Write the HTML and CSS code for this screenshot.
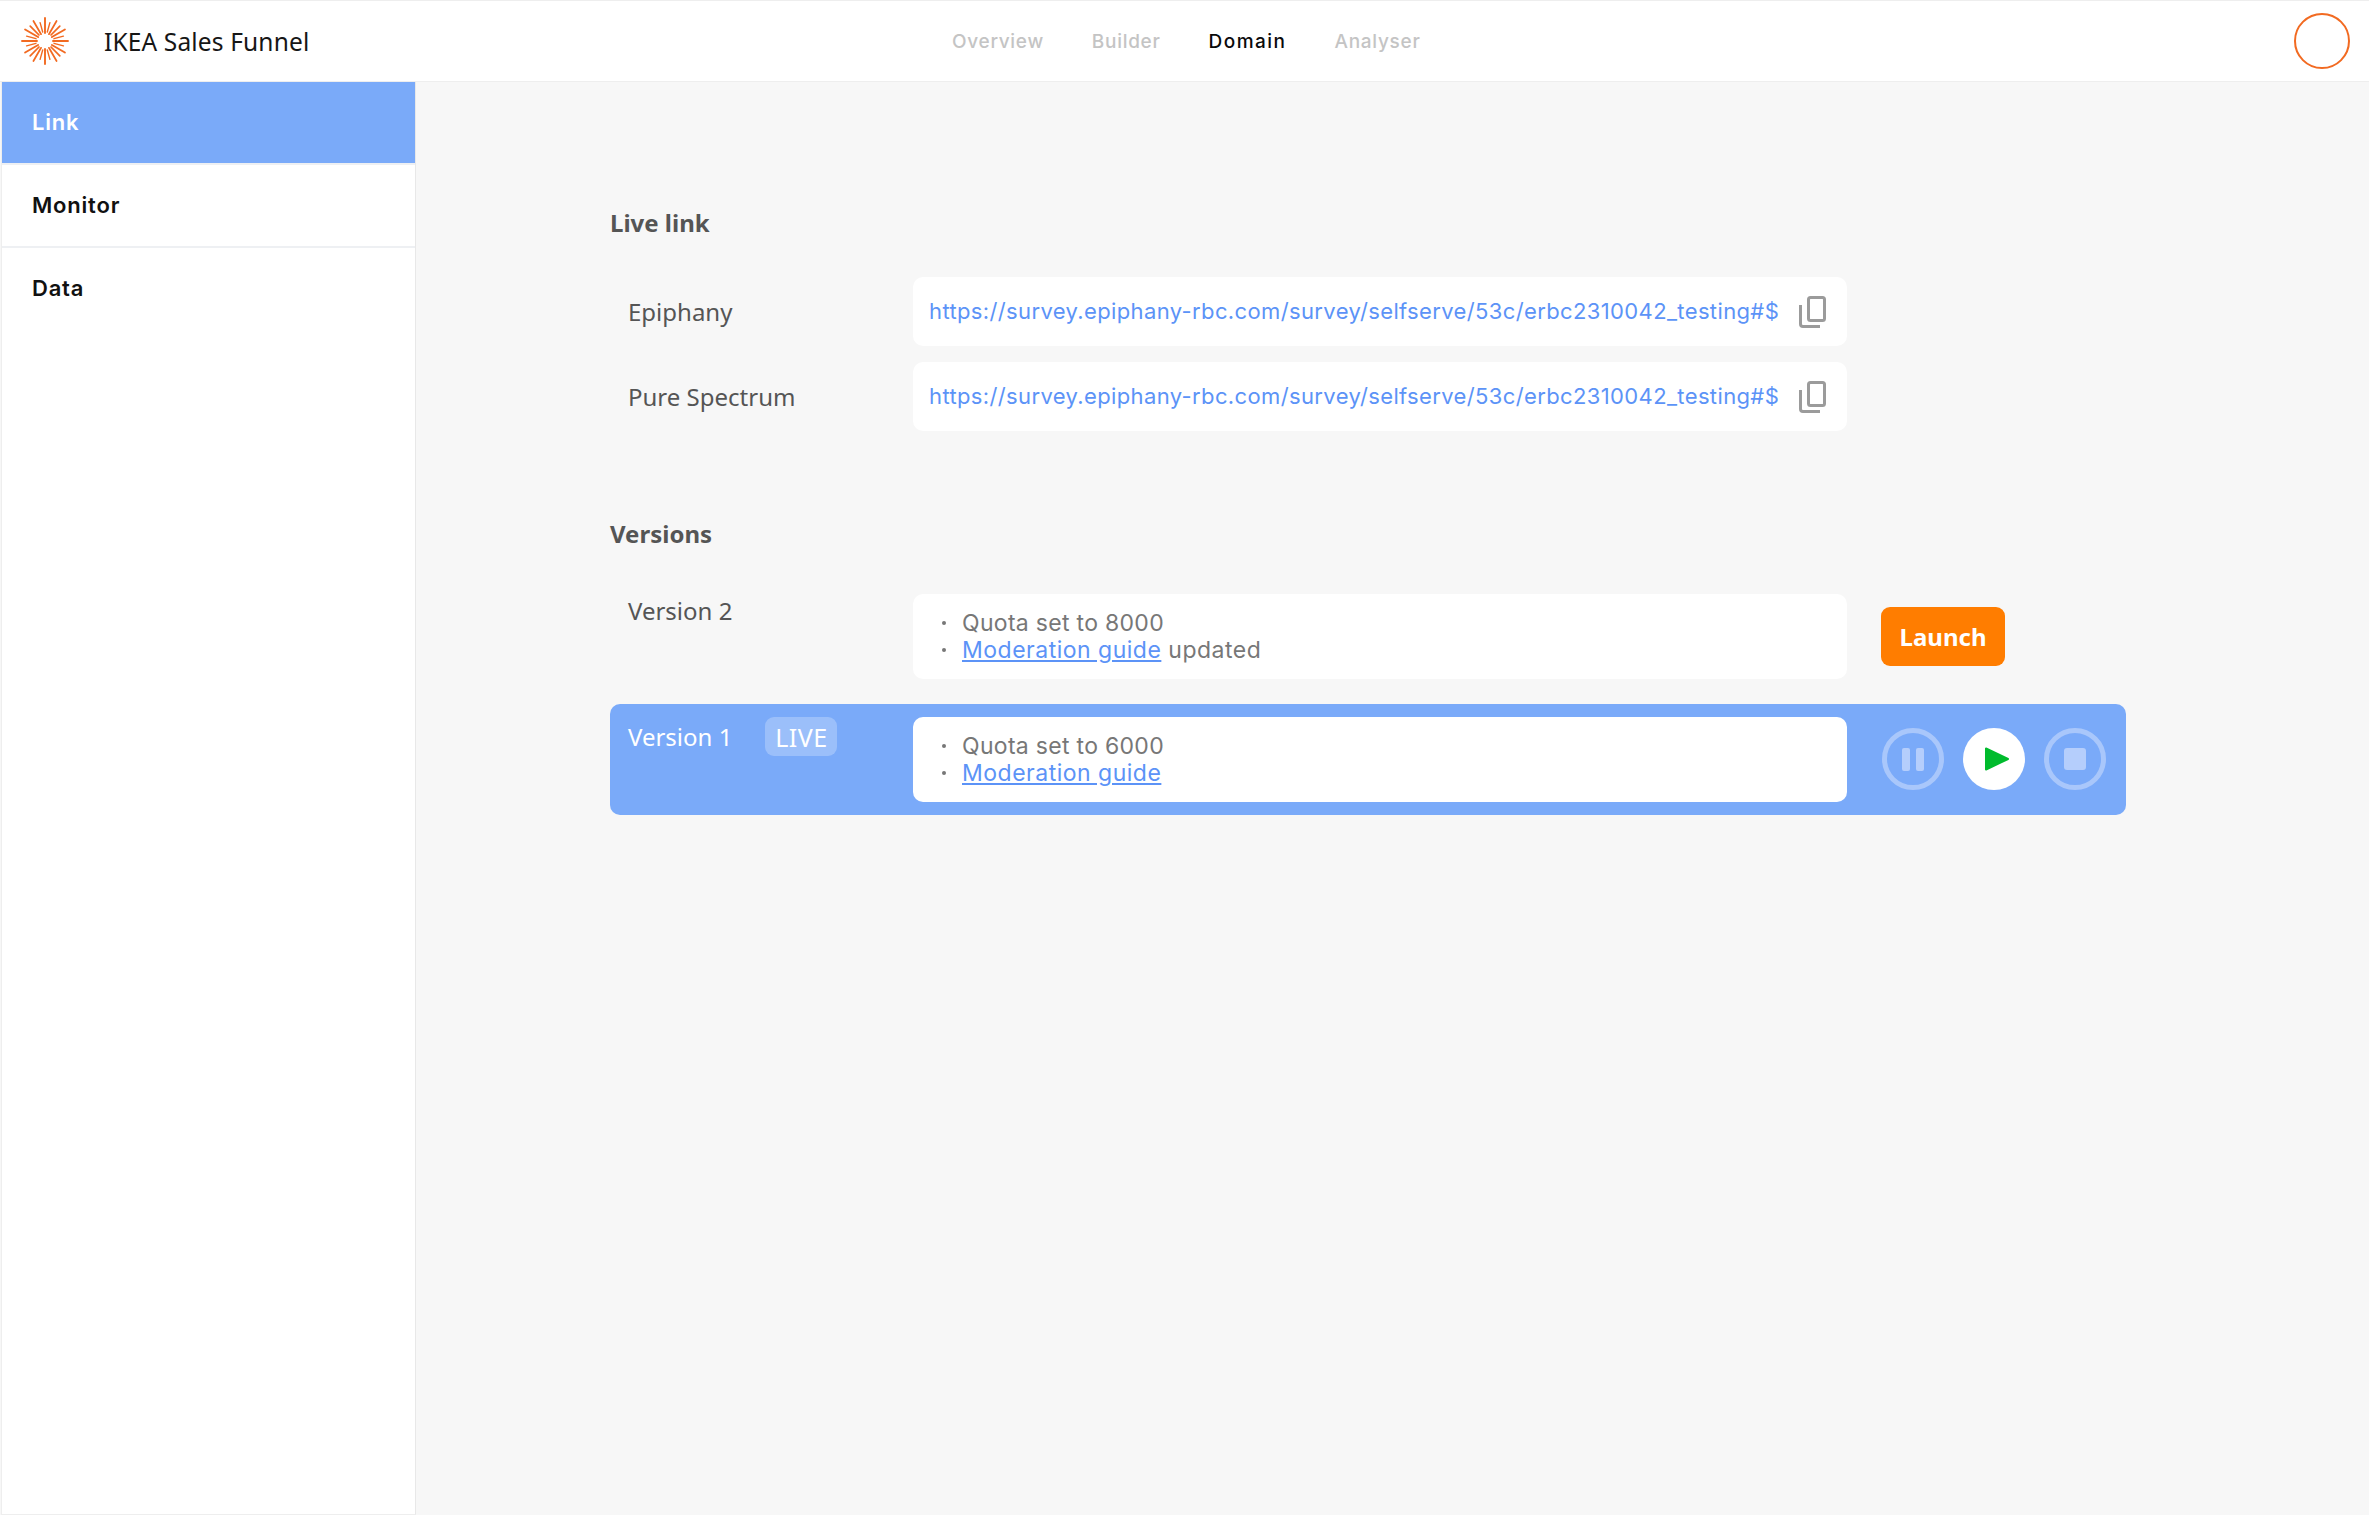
FILE: index.html
```html
<!DOCTYPE html>
<html lang="en">
<head>
<meta charset="utf-8">
<title>IKEA Sales Funnel</title>
<link rel="stylesheet" href="styles.css">
</head>
<body>
<header class="topbar">
  <div class="brand">
    <svg class="logo" viewBox="-24 -24 48 48" width="48" height="48">
      <g id="q">
        <path class="ray-long" d="M0-23V-8M11.5-19.9 4-6.9M19.9-11.5 6.9-4" />
        <path class="ray-mid" d="M14.8-14.8 6-6" />
        <path class="ray-short" d="M4.9-18.4 2.3-9M18.4-4.9 9-2.3" />
      </g>
      <use href="#q" transform="rotate(90)"/>
      <use href="#q" transform="rotate(180)"/>
      <use href="#q" transform="rotate(270)"/>
    </svg>
    <span class="brand-name">IKEA Sales Funnel</span>
  </div>
  <nav class="tabs">
    <a class="tab">Overview</a>
    <a class="tab">Builder</a>
    <a class="tab tab-active">Domain</a>
    <a class="tab">Analyser</a>
  </nav>
  <div class="avatar"></div>
</header>
<div class="shell">
  <aside class="sidebar">
    <a class="side-item side-active">Link</a>
    <a class="side-item">Monitor</a>
    <a class="side-item side-last">Data</a>
  </aside>
  <main class="content">
    <h2 class="heading">Live link</h2>
    <div class="links">
      <div class="row">
        <span class="label">Epiphany</span>
        <div class="card url-card">
          <a class="url">https://survey.epiphany-rbc.com/survey/selfserve/53c/erbc2310042_testing#$</a>
          <svg class="copy" viewBox="0 0 27 32" width="27" height="32"><rect x="9.5" y="1.5" width="16" height="23" rx="2"/><path d="M1.5 9v19a2.5 2.5 0 0 0 2.5 2.5h17"/></svg>
        </div>
      </div>
      <div class="row">
        <span class="label">Pure Spectrum</span>
        <div class="card url-card">
          <a class="url">https://survey.epiphany-rbc.com/survey/selfserve/53c/erbc2310042_testing#$</a>
          <svg class="copy" viewBox="0 0 27 32" width="27" height="32"><rect x="9.5" y="1.5" width="16" height="23" rx="2"/><path d="M1.5 9v19a2.5 2.5 0 0 0 2.5 2.5h17"/></svg>
        </div>
      </div>
    </div>
    <h2 class="heading heading-versions">Versions</h2>
    <div class="row version">
      <span class="label version-label">Version 2</span>
      <div class="card notes">
        <ul class="note-list">
          <li>Quota set to 8000</li>
          <li><span class="guide-line"><a class="guide">Moderation guide</a> updated</span></li>
        </ul>
      </div>
      <button class="launch">Launch</button>
    </div>
    <div class="row version version-live">
      <div class="live-head">
        <span class="label version-label">Version 1</span>
        <span class="badge">LIVE</span>
      </div>
      <div class="card notes">
        <ul class="note-list">
          <li>Quota set to 6000</li>
          <li><span class="guide-line"><a class="guide">Moderation guide</a></span></li>
        </ul>
      </div>
      <div class="controls">
        <svg class="ctl" viewBox="0 0 62 62" width="62" height="62"><circle class="ring" cx="31" cy="31" r="28.5"/><rect class="ghost" x="20" y="20" width="8" height="23" rx="2"/><rect class="ghost" x="34" y="20" width="8" height="23" rx="2"/></svg>
        <svg class="ctl" viewBox="0 0 62 62" width="62" height="62"><circle class="disc" cx="31" cy="31" r="31"/><path class="play" d="M23 20.5v21l22-10.5z"/></svg>
        <svg class="ctl" viewBox="0 0 62 62" width="62" height="62"><circle class="ring" cx="31" cy="31" r="28.5"/><rect class="ghost" x="20" y="20" width="22" height="22" rx="3"/></svg>
      </div>
    </div>
  </main>
</div>
</body>
</html>
```
FILE: styles.css
```css
* { box-sizing: border-box; }
html, body { margin: 0; height: 100%; }
body {
  display: flex;
  flex-direction: column;
  min-height: 1515px;
  background: #f7f7f7;
  font-family: "Noto Sans", sans-serif;
  color: #555;
}
.topbar {
  height: 82px;
  flex: none;
  display: flex;
  align-items: center;
  position: relative;
  background: #fff;
  border-top: 1px solid #eee;
  border-bottom: 1px solid #eee;
  padding: 0 19px 0 21px;
}
.brand { display: flex; align-items: center; gap: 35px; width: 931px; }
.logo { flex: none; }
.logo path { fill: none; stroke: #f26a21; stroke-linecap: round; }
.ray-long { stroke-width: 1.9; }
.ray-mid { stroke-width: 1.7; }
.ray-short { stroke-width: 1.4; }
.brand-name { font-size: 24.5px; color: #161616; letter-spacing: 0.15px; }
.tabs { display: flex; gap: 48px; flex: 1; }
.tab { font-family: Inter, sans-serif; font-size: 19px; font-weight: 500; color: #c4c4c4; letter-spacing: 0.7px; }
.tab-active { color: #0a0a0a; letter-spacing: 1.5px; }
.avatar { width: 56px; height: 56px; flex: none; border: 2px solid #f26a21; border-radius: 50%; }

.shell { flex: 1; display: flex; }
.sidebar {
  width: 415px;
  flex: none;
  margin-left: 1px;
  background: #fff;
  border-left: 1px solid #eee;
  border-right: 1px solid #e8e8e8;
  border-bottom: 1px solid #eee;
}
.side-item {
  display: flex;
  align-items: center;
  height: 83px;
  padding: 0 0 2px 30px;
  font-family: Inter, sans-serif;
  font-size: 22px;
  font-weight: 600;
  letter-spacing: 0.8px;
  color: #111;
  border-bottom: 2px solid #eef0f3;
}
.side-active { background: #7aaaf9; color: #fff; }
.side-last { border-bottom-color: transparent; }

.content { flex: 1; padding: 125px 0 0 194px; }
.heading { margin: 0; font-size: 24px; line-height: 32px; font-weight: 700; color: #555; }
.links { display: flex; flex-direction: column; gap: 16px; margin-top: 38px; }
.heading-versions { margin-top: 87px; margin-bottom: 44px; }
.row { display: flex; align-items: center; width: 1516px; }
.label { width: 303px; flex: none; padding-left: 18px; font-size: 24px; line-height: 34px; color: #555; }
.card { width: 934px; flex: none; background: #fff; border-radius: 10px; }
.url-card { height: 69px; display: flex; align-items: center; justify-content: space-between; padding: 0 21px 0 16px; }
.url { font-family: Inter, sans-serif; font-size: 22px; line-height: 28px; margin-bottom: 2px; color: #5c93f7; letter-spacing: 0.37px; white-space: nowrap; }
.copy rect, .copy path { fill: none; stroke: #9b9b9b; stroke-width: 3; }

.version { align-items: flex-start; }
.notes { height: 85px; display: flex; align-items: center; padding-left: 29px; }
.note-list { list-style: none; margin: 0; padding: 0; font-family: Inter, sans-serif; font-size: 23px; line-height: 27px; letter-spacing: 0.3px; color: #777; }
.note-list li { display: flex; align-items: center; gap: 16px; }
.note-list li::before { content: ""; width: 4px; height: 4px; border-radius: 50%; background: #777; flex: none; }
.guide-line { letter-spacing: 0.5px; }
.guide { color: #5c93f7; text-decoration: underline; }
.launch {
  width: 124px;
  height: 59px;
  margin: 13px 0 0 34px;
  border: 0;
  border-radius: 9px;
  background: #ff7d00;
  color: #fff;
  font-family: "Noto Sans", sans-serif;
  font-size: 24px;
  font-weight: 700;
}
.version-live {
  margin-top: 25px;
  height: 111px;
  padding-top: 13px;
  background: #7aaaf9;
  border-radius: 10px;
}
.live-head { width: 303px; flex: none; display: flex; align-items: center; }
.live-head .label { width: auto; color: #fff; line-height: 39px; }
.badge {
  margin-left: 33px;
  width: 72px;
  height: 39px;
  display: flex;
  align-items: center;
  justify-content: center;
  border-radius: 9px;
  background: rgba(255,255,255,.25);
  color: #fff;
  font-size: 25px;
  letter-spacing: 0.5px;
}
.controls { display: flex; gap: 19px; margin: 11px 0 0 35px; }
.ctl { flex: none; display: block; }
.ring { fill: none; stroke: #a9c7fb; stroke-width: 5; }
.ghost { fill: #b5cefc; }
.disc { fill: #fff; }
.play { fill: #00bb2d; stroke: #00bb2d; stroke-width: 2; stroke-linejoin: round; }
```
